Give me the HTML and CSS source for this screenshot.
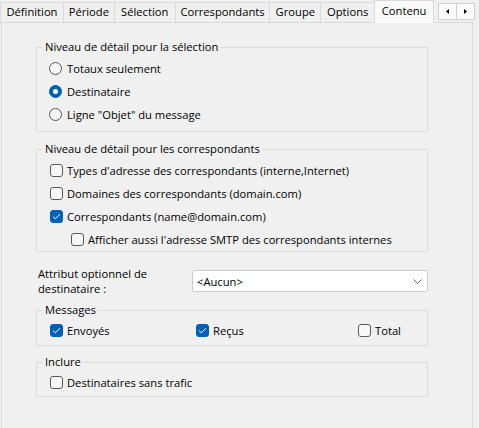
FILE: index.html
```html
<!DOCTYPE html>
<html lang="fr">
<head>
<meta charset="utf-8">
<title>Contenu</title>
<link rel="stylesheet" href="styles.css">
</head>
<body>
<div class="window">
  <div class="tabstrip">
    <div class="tab t-def">Définition</div>
    <div class="tab t-per">Période</div>
    <div class="tab t-sel">Sélection</div>
    <div class="tab t-cor">Correspondants</div>
    <div class="tab t-grp">Groupe</div>
    <div class="tab t-opt">Options</div>
    <div class="tab active t-con">Contenu</div>
    <div class="tabfill">
      <div class="scroller">
        <span class="arrow"><svg width="3" height="5" viewBox="0 0 3 5"><path d="M3 0V5L0 2.5Z" fill="#000"/></svg></span>
        <span class="arrow"><svg width="3" height="5" viewBox="0 0 3 5"><path d="M0 0V5L3 2.5Z" fill="#000"/></svg></span>
      </div>
    </div>
  </div>
  <div class="panel">
    <fieldset class="group g1">
      <legend>Niveau de détail pour la sélection</legend>
      <div class="row"><span class="radio"></span><span class="lbl">Totaux seulement</span></div>
      <div class="row"><span class="radio on"></span><span class="lbl">Destinataire</span></div>
      <div class="row"><span class="radio"></span><span class="lbl">Ligne "Objet" du message</span></div>
    </fieldset>

    <fieldset class="group g2">
      <legend>Niveau de détail pour les correspondants</legend>
      <div class="row"><span class="check"></span><span class="lbl">Types d'adresse des correspondants (interne,Internet)</span></div>
      <div class="row"><span class="check"></span><span class="lbl">Domaines des correspondants (domain.com)</span></div>
      <div class="row"><span class="check on"><svg width="9" height="7" viewBox="0 0 9 7"><path d="M1 3.6L3.3 5.8L8 1.2" fill="none" stroke="#fff" stroke-width="1"/></svg></span><span class="lbl">Correspondants (name@domain.com)</span></div>
      <div class="row sub"><span class="check"></span><span class="lbl">Afficher aussi l'adresse SMTP des correspondants internes</span></div>
    </fieldset>

    <div class="attr">
      <div class="attr-label">Attribut optionnel de<br>destinataire :</div>
      <div class="select">
        <span class="select-val">&lt;Aucun&gt;</span>
        <svg class="chev" width="9" height="5" viewBox="0 0 9 5"><path d="M0.5 0.5L4.5 4.5L8.5 0.5" fill="none" stroke="#606060" stroke-width="1"/></svg>
      </div>
    </div>

    <fieldset class="group g3">
      <legend>Messages</legend>
      <div class="msgrow">
        <div class="row"><span class="check on"><svg width="9" height="7" viewBox="0 0 9 7"><path d="M1 3.6L3.3 5.8L8 1.2" fill="none" stroke="#fff" stroke-width="1"/></svg></span><span class="lbl">Envoyés</span></div>
        <div class="row"><span class="check on"><svg width="9" height="7" viewBox="0 0 9 7"><path d="M1 3.6L3.3 5.8L8 1.2" fill="none" stroke="#fff" stroke-width="1"/></svg></span><span class="lbl">Reçus</span></div>
        <div class="row"><span class="check"></span><span class="lbl">Total</span></div>
      </div>
    </fieldset>

    <fieldset class="group g4">
      <legend>Inclure</legend>
      <div class="row"><span class="check"></span><span class="lbl">Destinataires sans trafic</span></div>
    </fieldset>
  </div>
</div>
</body>
</html>
```

FILE: styles.css
```css
html, body {
  margin: 0;
  padding: 0;
  background: #f0f0f0;
}
body {
  font-family: "Open Sans", "Noto Sans", sans-serif;
  font-size: 11.2px;
  color: #000;
  width: 479px;
  height: 428px;
  overflow: hidden;
}
.window {
  width: 479px;
  height: 428px;
}
.tabstrip {
  display: flex;
  align-items: flex-end;
  height: 23px;
  width: 473px;
}
.tab {
  box-sizing: border-box;
  height: 21px;
  border: 1px solid #d9d9d9;
  border-right: none;
  background: #f0f0f0;
  display: flex;
  align-items: center;
  justify-content: center;
  padding-bottom: 2px;
  white-space: nowrap;
}
.t-def { width: 63px; }
.t-per { width: 51px; }
.t-sel { width: 61px; }
.t-cor { width: 95px; }
.t-grp { width: 51px; }
.t-opt { width: 54px; }
.tab.active {
  width: 60px;
  height: 23px;
  border-right: 1px solid #d9d9d9;
  border-bottom: none;
  background: #f9f9f9;
  padding-bottom: 3px;
}
.tabfill {
  flex: 1;
  height: 23px;
  box-sizing: border-box;
  border-bottom: 1px solid #d9d9d9;
  display: flex;
  align-items: flex-start;
  padding-top: 3px;
  padding-left: 4px;
}
.scroller {
  display: flex;
  height: 17px;
  box-sizing: border-box;
  border: 1px solid #cfcfcf;
  background: #fbfbfb;
  margin-right: -2px;
}
.arrow {
  width: 17px;
  display: flex;
  align-items: center;
  justify-content: center;
}
.arrow + .arrow {
  border-left: 1px solid #cfcfcf;
}
.arrow svg { display: block; }

.panel {
  box-sizing: border-box;
  width: 472px;
  height: 405px;
  margin-left: 1px;
  border: 1px solid #d9d9d9;
  border-top: none;
  border-bottom: none;
  padding: 16px 44px 0 34px;
}
.group {
  box-sizing: border-box;
  width: 392px;
  margin: 0;
  border: 1px solid #dcdcdc;
  padding: 2px 0 5px 13px;
  min-width: 0;
}
.group legend {
  padding: 0 2px;
  margin-left: -7px;
  line-height: 16px;
  height: 16px;
}
.g2 { margin-top: 9px; padding-bottom: 0; }
.g3 { margin-top: 6px; padding-top: 1px; padding-bottom: 3px; }
.g4 { margin-top: 8px; padding-top: 1px; padding-bottom: 2px; }

.row {
  display: flex;
  align-items: center;
  height: 23px;
  white-space: nowrap;
}
.row.sub { padding-left: 21px; }
.lbl { line-height: 16px; }

.radio {
  box-sizing: border-box;
  width: 13px;
  height: 13px;
  border-radius: 50%;
  border: 1px solid #555;
  background: #f6f6f6;
  margin-left: -1px;
  margin-right: 5px;
  display: flex;
  align-items: center;
  justify-content: center;
}
.radio.on {
  background: #005fb8;
  border-color: #005fb8;
}
.radio.on::after {
  content: "";
  width: 5px;
  height: 5px;
  border-radius: 50%;
  background: #fff;
}
.check {
  box-sizing: border-box;
  width: 13px;
  height: 13px;
  border-radius: 3px;
  border: 1px solid #5a5a5a;
  background: #f8f8f8;
  margin-right: 4px;
  display: flex;
  align-items: center;
  justify-content: center;
}
.check.on {
  background: #005fb8;
  border-color: #005fb8;
}
.check svg { display: block; }

.attr {
  display: flex;
  align-items: center;
  width: 392px;
  margin-top: 14px;
}
.attr-label {
  width: 156px;
  padding-left: 2px;
  box-sizing: border-box;
  line-height: 15px;
}
.select {
  box-sizing: border-box;
  width: 236px;
  height: 22px;
  border: 1px solid #cccccc;
  border-radius: 2px;
  background: #fff;
  display: flex;
  align-items: center;
  justify-content: space-between;
  padding: 0 5px 0 4px;
}
.chev { display: block; }

.msgrow {
  display: grid;
  grid-template-columns: 146px 162px auto;
}
```
